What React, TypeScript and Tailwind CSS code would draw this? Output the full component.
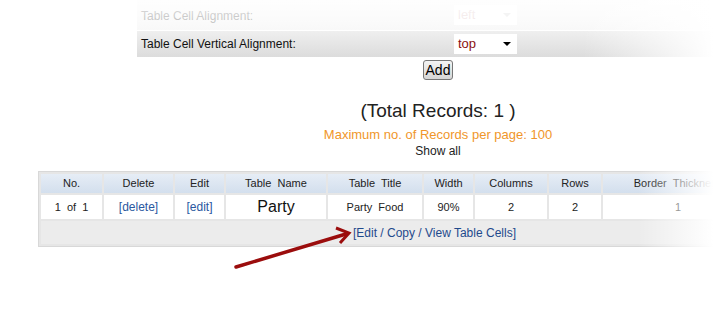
const cols = [
  { label: "No.", w: 61 },
  { label: "Delete", w: 69 },
  { label: "Edit", w: 49 },
  { label: "Table  Name", w: 100 },
  { label: "Table  Title", w: 94 },
  { label: "Width", w: 49 },
  { label: "Columns", w: 72 },
  { label: "Rows", w: 52 },
  { label: "Border  Thickness", w: 150 },
];

const Select = ({ value, faded }: { value: string; faded?: boolean }) => (
  <div className={`flex h-[20px] w-[63px] items-center justify-between bg-white pl-[4px] pr-[6px] text-[13px] ${faded ? "text-[#d4b0b0]" : "text-[#8b1010]"}`}>
    <span>{value}</span>
    <span className={`h-0 w-0 border-x-[4px] border-t-[4px] border-x-transparent ${faded ? "border-t-[#ccc]" : "border-t-black"}`} />
  </div>
);

export default function App() {
  return (
    <div className="relative h-[310px] w-[713px] overflow-hidden bg-white font-['Liberation_Sans',Arial,sans-serif]">
      {/* settings panel */}
      <div className="ml-[137px] w-[640px]">
        <div className="flex h-[31px] items-center border-b border-white bg-gradient-to-b from-[#f6f6f6] to-[#ececec]">
          <div className="w-[317px] pl-[4px] pt-[2px] text-[12px] text-[#222]">Table Cell Alignment:</div>
          <Select value="left" faded />
        </div>
        <div className="flex h-[26px] items-center bg-gradient-to-b from-[#efefef] to-[#dcdcdc]">
          <div className="w-[317px] pl-[4px] text-[12px] text-[#111]">Table Cell Vertical Alignment:</div>
          <Select value="top" />
        </div>
      </div>

      <div className="ml-[137px] flex w-[602px] flex-col items-center">
        <button className="mt-[3px] h-[20px] rounded-[3px] border border-[#777] bg-gradient-to-b from-[#f4f4f4] to-[#d6d6d6] px-[2px] text-[14px] leading-none text-black">
          Add
        </button>
        <div className="mt-[20px] text-[19px] leading-[22px] text-[#222]">(Total Records: 1 )</div>
        <div className="mt-[5px] text-[13px] leading-[16px] text-[#f0962a]">Maximum no. of Records per page: 100</div>
        <div className="mt-[1px] text-[12px] leading-[15px] text-[#222]">Show all</div>
      </div>

      {/* records table */}
      <div className="ml-[38px] mt-[12px]">
        <table className="w-[718px] table-fixed border-separate border-spacing-[2px] border border-[#d8d8d8] bg-[#e6e6e6] text-[11px] text-[#222]">
          <thead>
            <tr className="h-[19px]">
              {cols.map((c) => (
                <th
                  key={c.label}
                  style={{ width: c.w }}
                  className="whitespace-pre bg-gradient-to-b from-[#e6edf6] to-[#d3dfed] p-0 text-center font-normal"
                >
                  {c.label}
                </th>
              ))}
            </tr>
          </thead>
          <tbody>
            <tr className="h-[22px] bg-white text-center">
              <td className="whitespace-pre">1  of  1</td>
              <td className="text-[12px] text-[#2a58a0]">[delete]</td>
              <td className="text-[12px] text-[#2a58a0]">[edit]</td>
              <td className="text-[16px] text-[#111]">Party</td>
              <td className="whitespace-pre">Party  Food</td>
              <td>90%</td>
              <td>2</td>
              <td>2</td>
              <td>1</td>
            </tr>
            <tr className="h-[23px] bg-[#ececec]">
              <td colSpan={9} className="pl-[312px] text-[12px] text-[#1f4a8c]">
                [Edit / Copy / View Table Cells]
              </td>
            </tr>
          </tbody>
        </table>
      </div>

      {/* annotation arrow */}
      <svg className="absolute left-0 top-0" width="713" height="310" viewBox="0 0 713 310">
        <line x1="236" y1="267" x2="346" y2="234" stroke="#9b0d0d" strokeWidth="3.5" strokeLinecap="round" />
        <polyline points="336,228 349,233 340,243" fill="none" stroke="#9b0d0d" strokeWidth="3" strokeLinejoin="miter" />
      </svg>

      {/* screenshot fades */}
      <div className="absolute left-0 top-0 h-[31px] w-full bg-gradient-to-b from-white/90 to-white/65" />
      <div className="absolute right-0 top-0 h-[60px] w-[130px] bg-gradient-to-r from-transparent to-white" />
      <div className="absolute right-0 top-[168px] h-[82px] w-[75px] bg-gradient-to-r from-transparent via-white/50 to-white" />
    </div>
  );
}
